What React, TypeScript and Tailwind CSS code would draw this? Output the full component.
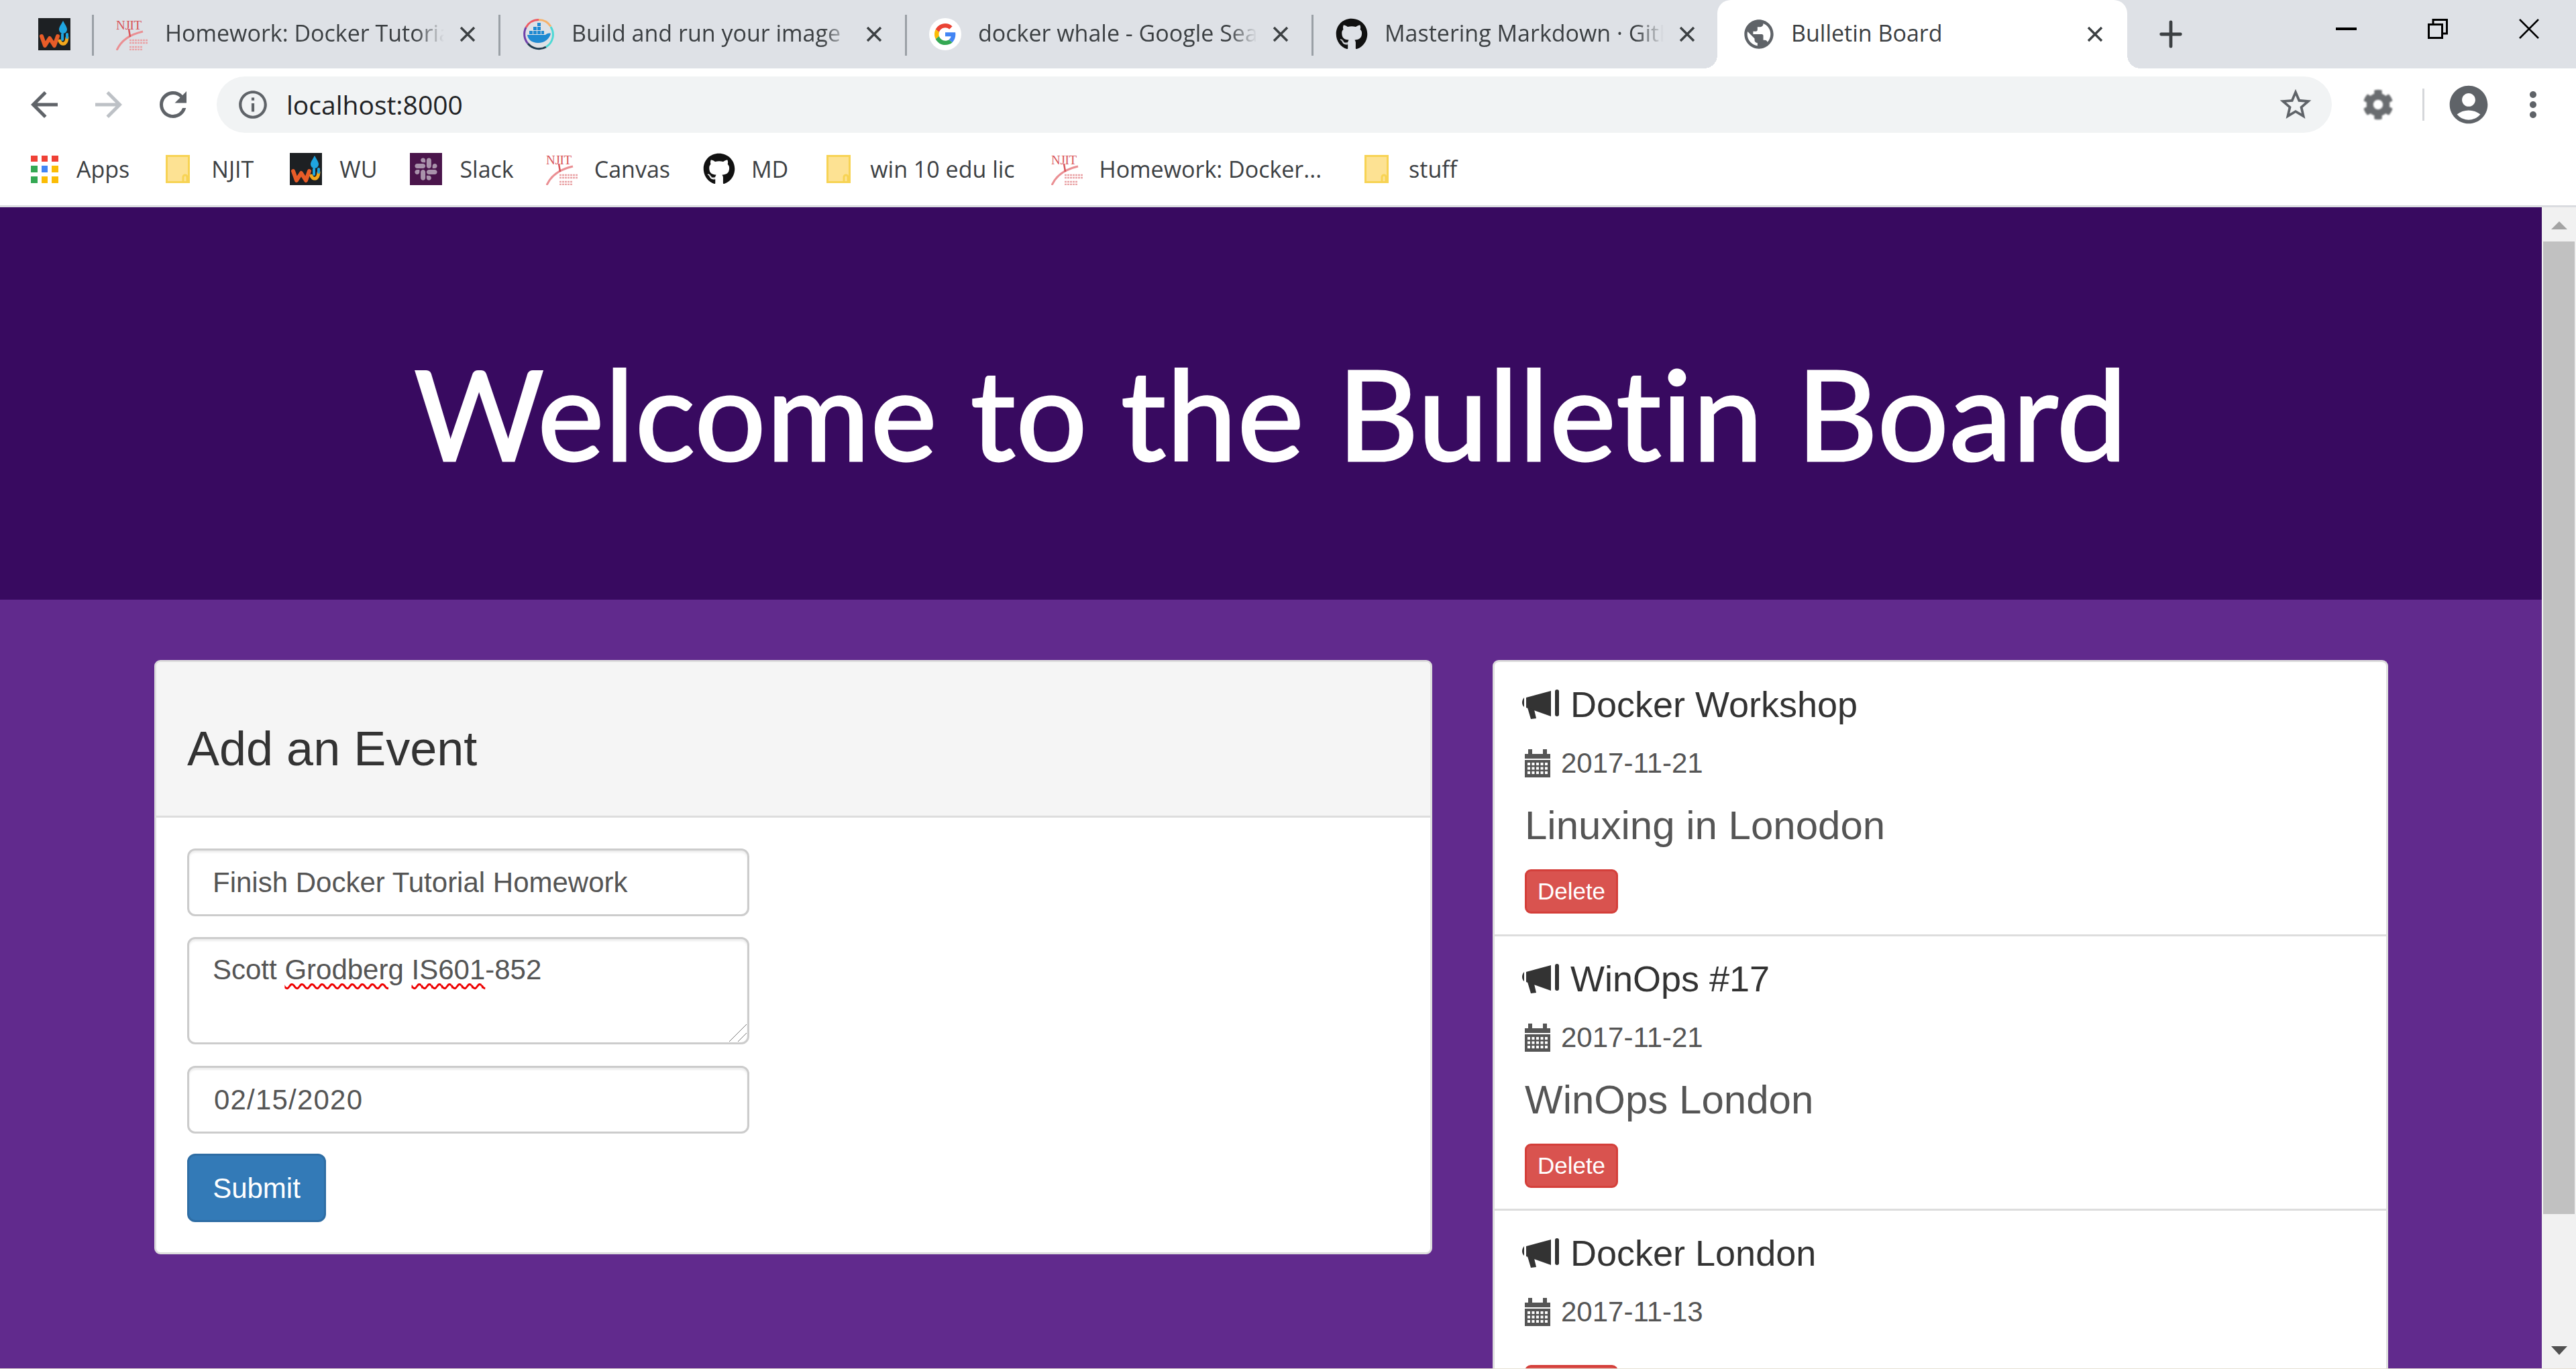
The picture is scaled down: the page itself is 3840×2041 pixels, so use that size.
import type { ReactNode } from "react";
import { FaCog, FaGithub, FaSlack } from "react-icons/fa";
import {
  MdAccountCircle,
  MdArrowBack,
  MdArrowForward,
  MdInfoOutline,
  MdMoreVert,
  MdPublic,
  MdRefresh,
  MdStarBorder,
} from "react-icons/md";

function WuIcon() {
  return (
    <svg viewBox="0 0 48 48" className="size-[48px] shrink-0">
      <rect width="48" height="48" fill="#1d2023" />
      <path d="M37 4c3 6 6 9 6 13a6 6 0 0 1-12 0c0-4 3-7 6-13z" fill="#1fa5e0" />
      <path d="M5 27l5 14 7-11 7 11 5-14" fill="none" stroke="#e85c28" strokeWidth="6" strokeLinecap="round" strokeLinejoin="round" />
      <path d="M32 34c2 6 10 7 11-5" fill="none" stroke="#f4a81d" strokeWidth="5" strokeLinecap="round" />
      <path d="M36 24v8" stroke="#1fa5e0" strokeWidth="4" strokeLinecap="round" />
      <path d="M43 24v5" stroke="#1fa5e0" strokeWidth="4" strokeLinecap="round" />
    </svg>
  );
}

function NjitIcon() {
  return (
    <svg viewBox="0 0 48 48" className="size-[48px] shrink-0">
      <text x="0" y="17" fontSize="19" fontFamily="Liberation Serif, serif" fill="#d8555a" textLength="38" lengthAdjust="spacing">
        NJIT
      </text>
      <path d="M1 48C8 32 22 24 40 20" fill="none" stroke="#ea8f93" strokeWidth="3" />
      <path d="M19 16l2 12" stroke="#d8555a" strokeWidth="2.5" />
      <path d="M20 33h28M20 37h28M20 43h20M20 47h20" stroke="#e9a4a7" strokeWidth="2.5" strokeDasharray="3 1" />
    </svg>
  );
}

function DockerIcon() {
  return (
    <svg viewBox="0 0 48 48" className="size-[48px] shrink-0" fill="none" strokeWidth="3">
      <path d="M24 2.5a21.5 21.5 0 0 1 18 10" stroke="#f6b26b" />
      <path d="M24 2.5A21.5 21.5 0 0 0 5 14" stroke="#ee5a64" />
      <path d="M5 14a21.5 21.5 0 0 0 3 24" stroke="#6f3fa8" />
      <path d="M8 38a21.5 21.5 0 0 0 27 5" stroke="#1f3a4d" />
      <path d="M35 43a21.5 21.5 0 0 0 7-30" stroke="#4dd9d5" />
      <path d="M7 25h27c2-2 5-3 8-2-2 8-9 14-19 14-9 0-15-5-16-12z" fill="#1f8ad2" stroke="none" />
      <path d="M10 19h5v5h-5zM16 19h5v5h-5zM22 19h5v5h-5zM28 19h4v5h-4zM16 13h5v5h-5zM22 13h5v5h-5zM22 7h5v5h-5z" fill="#1f8ad2" stroke="none" />
    </svg>
  );
}

function GoogleIcon() {
  return (
    <svg viewBox="0 0 48 48" className="size-[48px] shrink-0">
      <circle cx="24" cy="24" r="24" fill="#fff" />
      <g transform="translate(8 8) scale(0.667)">
        <path fill="#EA4335" d="M24 9.5c3.5 0 6.6 1.2 9.1 3.6l6.8-6.8C35.8 2.4 30.4 0 24 0 14.6 0 6.5 5.4 2.6 13.2l7.9 6.2C12.4 13.7 17.7 9.5 24 9.5z" />
        <path fill="#4285F4" d="M47 24.5c0-1.6-.1-3.1-.4-4.5H24v9h12.9c-.6 3-2.2 5.5-4.7 7.2l7.7 6c4.5-4.2 7.1-10.3 7.1-17.7z" />
        <path fill="#FBBC05" d="M10.5 28.6c-.5-1.4-.8-3-.8-4.6s.3-3.2.8-4.6l-7.9-6.2C.9 16.5 0 20.1 0 24s.9 7.5 2.6 10.8l7.9-6.2z" />
        <path fill="#34A853" d="M24 48c6.5 0 11.9-2.1 15.9-5.8l-7.7-6c-2.2 1.4-4.9 2.3-8.2 2.3-6.3 0-11.6-4.2-13.5-10l-7.9 6.2C6.5 42.6 14.6 48 24 48z" />
      </g>
    </svg>
  );
}

function AppsIcon() {
  const colors = ["#ef4136", "#ef4136", "#ef4136", "#34a853", "#4285f4", "#fbbc05", "#34a853", "#fbbc05", "#fbbc05"];
  return (
    <div className="grid size-[41px] shrink-0 grid-cols-3 gap-[6px]">
      {colors.map((c, i) => (
        <span key={i} className="block" style={{ background: c }} />
      ))}
    </div>
  );
}

function NoteIcon() {
  return (
    <svg viewBox="0 0 36 42" className="h-[42px] w-[36px] shrink-0">
      <path d="M1.5 1.5h33v39h-33z" fill="#fde293" stroke="#f7d354" strokeWidth="3" />
      <path d="M26 40v-7a3 3 0 0 1 6 0v7" fill="none" stroke="#f7d354" strokeWidth="3" />
    </svg>
  );
}

function CloseGlyph() {
  return (
    <svg viewBox="0 0 24 24" className="size-[24px] shrink-0" stroke="#3c4043" strokeWidth="3.5">
      <path d="M2 2l20 20M22 2L2 22" />
    </svg>
  );
}

function Tab({ icon, title }: { icon: ReactNode; title: string }) {
  return (
    <div className="relative flex h-[102px] w-[606px] shrink-0 items-center pl-[33px]">
      {icon}
      <span className="-mt-[3px] ml-[25px] w-[416px] overflow-hidden whitespace-nowrap text-[34px] text-[#3c4043] [mask-image:linear-gradient(to_right,#000_90%,transparent)]">
        {title}
      </span>
      <span className="ml-[23px]">
        <CloseGlyph />
      </span>
      <span className="absolute right-0 top-[22px] h-[61px] w-[3px] bg-[#9aa0a6]" />
    </div>
  );
}

function Bookmark({ icon, label, className }: { icon: ReactNode; label: string; className: string }) {
  return (
    <div className={`flex items-center ${className}`}>
      {icon}
      <span className="whitespace-nowrap text-[34px] text-[#3c4043]">{label}</span>
    </div>
  );
}

function Bullhorn() {
  return (
    <svg viewBox="0 0 58 44" className="h-[44px] w-[58px] shrink-0" fill="#333">
      <path d="M4 12C0 16 0 23 4 26z" />
      <path d="M7 12L44 2v38L7 27z" />
      <path d="M9 27l10 3 3 13-8 1z" />
      <rect x="50" width="6" height="40" rx="3" />
    </svg>
  );
}

function CalendarGlyph() {
  const cells = [];
  for (let row = 0; row < 3; row++) {
    for (let col = 0; col < 5; col++) {
      cells.push(<rect key={`${row}-${col}`} x={4 + col * 6.5} y={20 + row * 6.5} width="4" height="4" fill="#fff" />);
    }
  }
  return (
    <svg viewBox="0 0 38 42" className="h-[42px] w-[38px] shrink-0">
      <path d="M0 7h5V0h6v7h16V0h6v7h5v7H0z" fill="#555" />
      <path d="M0 16h38v26H0z" fill="#555" />
      {cells}
    </svg>
  );
}

function EventItem({ title, date, text, last }: { title: string; date: string; text?: string; last?: boolean }) {
  return (
    <li className={`h-[409px] shrink-0 px-[45px] pt-[33px] ${last ? "" : "border-b-[3px] border-[#ddd]"}`}>
      <h4 className="flex items-center gap-[15px] text-[54px] leading-[60px] text-[#333]">
        <span className="-ml-[5px]">
          <Bullhorn />
        </span>
        {title}
      </h4>
      <p className="mt-[28px] flex items-center gap-[16px] text-[42px] leading-[60px] text-[#555]">
        <CalendarGlyph />
        {date}
      </p>
      {text && <h3 className="mt-[30px] text-[60px] leading-[66px] text-[#555]">{text}</h3>}
      <button className={`flex h-[66px] w-[139px] items-center justify-center rounded-[9px] border-[3px] border-[#d43f3a] bg-[#d9534f] text-[35px] text-white ${text ? "mt-[32px]" : "mt-[49px]"}`}>
        Delete
      </button>
    </li>
  );
}

const fieldClass =
  "block w-[838px] rounded-[12px] border-[3px] border-[#ccc] bg-white text-[42px] text-[#555] shadow-[inset_0_3px_3px_rgba(0,0,0,0.075)] outline-none";

export default function App() {
  return (
    <div className="flex h-screen flex-col overflow-hidden bg-white font-['Liberation_Sans',sans-serif]">
      {/* browser chrome */}
      <div className="font-['Open_Sans',sans-serif]">
        <div className="flex h-[102px] items-start bg-[#dee1e6]">
          <div className="relative flex h-[102px] w-[140px] shrink-0 items-center pl-[57px]">
            <WuIcon />
            <span className="absolute right-0 top-[22px] h-[61px] w-[3px] bg-[#9aa0a6]" />
          </div>
          <Tab icon={<NjitIcon />} title="Homework: Docker Tutorial" />
          <Tab icon={<DockerIcon />} title="Build and run your image" />
          <Tab icon={<GoogleIcon />} title="docker whale - Google Search" />
          <Tab icon={<FaGithub className="size-[48px] shrink-0 text-[#111]" />} title="Mastering Markdown · GitHub" />
          <div className="relative -ml-[4px] flex h-[102px] w-[611px] shrink-0 items-center rounded-t-[20px] bg-white pl-[36px] before:absolute before:-left-[20px] before:bottom-0 before:size-[20px] before:bg-[radial-gradient(circle_at_0_0,#dee1e6_20px,#fff_20px)] after:absolute after:-right-[20px] after:bottom-0 after:size-[20px] after:bg-[radial-gradient(circle_at_100%_0,#dee1e6_20px,#fff_20px)]">
            <MdPublic className="size-[52px] shrink-0 text-[#5f6368]" />
            <span className="-mt-[3px] ml-[22px] w-[441px] whitespace-nowrap text-[34px] text-[#3c4043]">Bulletin Board</span>
            <CloseGlyph />
          </div>
          <div className="ml-[43px] mt-[29px] flex size-[44px] items-center justify-center">
            <svg viewBox="0 0 36 44" className="h-[42px] w-[36px]" stroke="#3c4043" strokeWidth="5" strokeLinecap="round">
              <path d="M18 3v38M3 22h30" />
            </svg>
          </div>
          <div className="ml-auto flex h-[86px] items-center gap-[106px] pr-[55px]">
            <span className="h-[4px] w-[31px] bg-black" />
            <svg viewBox="0 0 30 30" className="size-[30px]" fill="none" stroke="#000" strokeWidth="3">
              <path d="M1.5 8.5h20v20h-20zM8 8V1.5h20.5V22H22" />
            </svg>
            <svg viewBox="0 0 30 30" className="size-[30px]" stroke="#000" strokeWidth="2.5">
              <path d="M1 1l28 28M29 1L1 29" />
            </svg>
          </div>
        </div>

        <div className="flex h-[108px] items-start pt-[12px]">
          <div className="flex h-[84px] w-[323px] shrink-0 items-center pl-[36px]">
            <MdArrowBack className="size-[60px] text-[#5f6368]" />
            <MdArrowForward className="ml-[36px] size-[60px] text-[#bdc1c6]" />
            <MdRefresh className="ml-[36px] size-[60px] text-[#5f6368]" />
          </div>
          <div className="flex h-[84px] w-[3153px] shrink-0 items-center rounded-full bg-[#f1f3f4] pl-[29px] pr-[26px]">
            <MdInfoOutline className="size-[50px] text-[#5f6368]" />
            <span className="ml-[25px] text-[39px] text-[#202124]">localhost:8000</span>
            <MdStarBorder className="ml-auto size-[56px] text-[#5f6368]" />
          </div>
          <div className="flex h-[84px] items-center">
            <FaCog className="ml-[46px] size-[46px] text-[#6a6d70] blur-[1px]" />
            <span className="ml-[43px] h-[48px] w-[3px] bg-[#d5d7da]" />
            <MdAccountCircle className="ml-[32px] size-[68px] text-[#5f6368]" />
            <MdMoreVert className="ml-[32px] size-[60px] text-[#5f6368]" />
          </div>
        </div>

        <div className="flex h-[96px] items-center pb-[12px] pl-[46px]">
          <Bookmark icon={<AppsIcon />} label="Apps" className="gap-[27px]" />
          <Bookmark icon={<NoteIcon />} label="NJIT" className="ml-[54px] gap-[32px]" />
          <Bookmark icon={<WuIcon />} label="WU" className="ml-[54px] gap-[26px]" />
          <Bookmark
            icon={
              <span className="flex size-[48px] shrink-0 items-center justify-center bg-[#4a154b]">
                <FaSlack className="size-[38px] text-[#a993ab]" />
              </span>
            }
            label="Slack"
            className="ml-[49px] gap-[26px]"
          />
          <Bookmark icon={<NjitIcon />} label="Canvas" className="ml-[48px] gap-[24px]" />
          <Bookmark icon={<FaGithub className="size-[48px] shrink-0 text-[#111]" />} label="MD" className="ml-[49px] gap-[24px]" />
          <Bookmark icon={<NoteIcon />} label="win 10 edu lic" className="ml-[57px] gap-[29px]" />
          <Bookmark icon={<NjitIcon />} label="Homework: Docker..." className="ml-[54px] gap-[24px]" />
          <Bookmark icon={<NoteIcon />} label="stuff" className="ml-[64px] gap-[30px]" />
        </div>
        <div className="h-[3px] bg-[#dadce0]" />
      </div>

      {/* page */}
      <div className="flex min-h-0 flex-1">
        <main className="min-w-0 flex-1 overflow-hidden bg-[#612a8d]">
          <header className="flex h-[585px] items-center justify-center bg-[#380a60] pt-[26px]">
            <h1 className="font-['Lato',sans-serif] text-[187px] leading-none tracking-[1.2px] text-white [-webkit-text-stroke:3px_white] [font-variant-ligatures:none]">
              Welcome to the Bulletin Board
            </h1>
          </header>
          <div className="flex items-start gap-[90px] pl-[230px] pt-[90px]">
            <section className="w-[1905px] shrink-0 overflow-hidden rounded-[9px] border-[3px] border-[#ddd] bg-white">
              <div className="h-[232px] border-b-[3px] border-[#ddd] bg-[#f5f5f5] px-[46px] pt-[90px]">
                <h2 className="text-[72px] leading-[79px] text-[#333]">Add an Event</h2>
              </div>
              <form className="px-[46px] pb-[45px] pt-[46px]">
                <input readOnly value="Finish Docker Tutorial Homework" className={`${fieldClass} h-[101px] px-[35px]`} />
                <div className={`${fieldClass} relative mt-[31px] h-[160px] px-[35px] pt-[16px] leading-[60px]`}>
                  Scott <span className="underline decoration-[#e00] decoration-wavy decoration-[3px] underline-offset-[6px]">Grodberg</span>{" "}
                  <span className="underline decoration-[#e00] decoration-wavy decoration-[3px] underline-offset-[6px]">IS601</span>-852
                  <svg viewBox="0 0 26 26" className="absolute bottom-[1px] right-[1px] size-[26px]" stroke="#777" strokeWidth="1">
                    <path d="M0 26L26 0M13 26L26 13" />
                  </svg>
                </div>
                <input readOnly value="02/15/2020" className={`${fieldClass} mt-[32px] h-[101px] px-[37px] tracking-[1.2px]`} />
                <button type="button" className="mt-[30px] block h-[102px] w-[207px] rounded-[12px] border-[3px] border-[#2e6da4] bg-[#337ab7] text-[42px] text-white">
                  Submit
                </button>
              </form>
            </section>

            <ul className="flex w-[1335px] shrink-0 flex-col overflow-hidden rounded-t-[9px] border-x-[3px] border-t-[3px] border-[#ddd] bg-white">
              <EventItem title="Docker Workshop" date="2017-11-21" text="Linuxing in Lonodon" />
              <EventItem title="WinOps #17" date="2017-11-21" text="WinOps London" />
              <EventItem title="Docker London" date="2017-11-13" last />
            </ul>
          </div>
        </main>

        {/* scrollbar */}
        <div className="flex w-[51px] shrink-0 flex-col items-center bg-[#f1f1f1]">
          <span className="mt-[21px] h-0 w-0 border-x-[12px] border-b-[12px] border-x-transparent border-b-[#a3a3a3]" />
          <span className="mt-[18px] h-[1450px] w-[47px] bg-[#c1c1c1]" />
          <span className="mt-[197px] h-0 w-0 border-x-[12px] border-t-[13px] border-x-transparent border-t-[#505050]" />
        </div>
      </div>
      <div className="h-px shrink-0 bg-[#e6e0d4]" />
    </div>
  );
}
